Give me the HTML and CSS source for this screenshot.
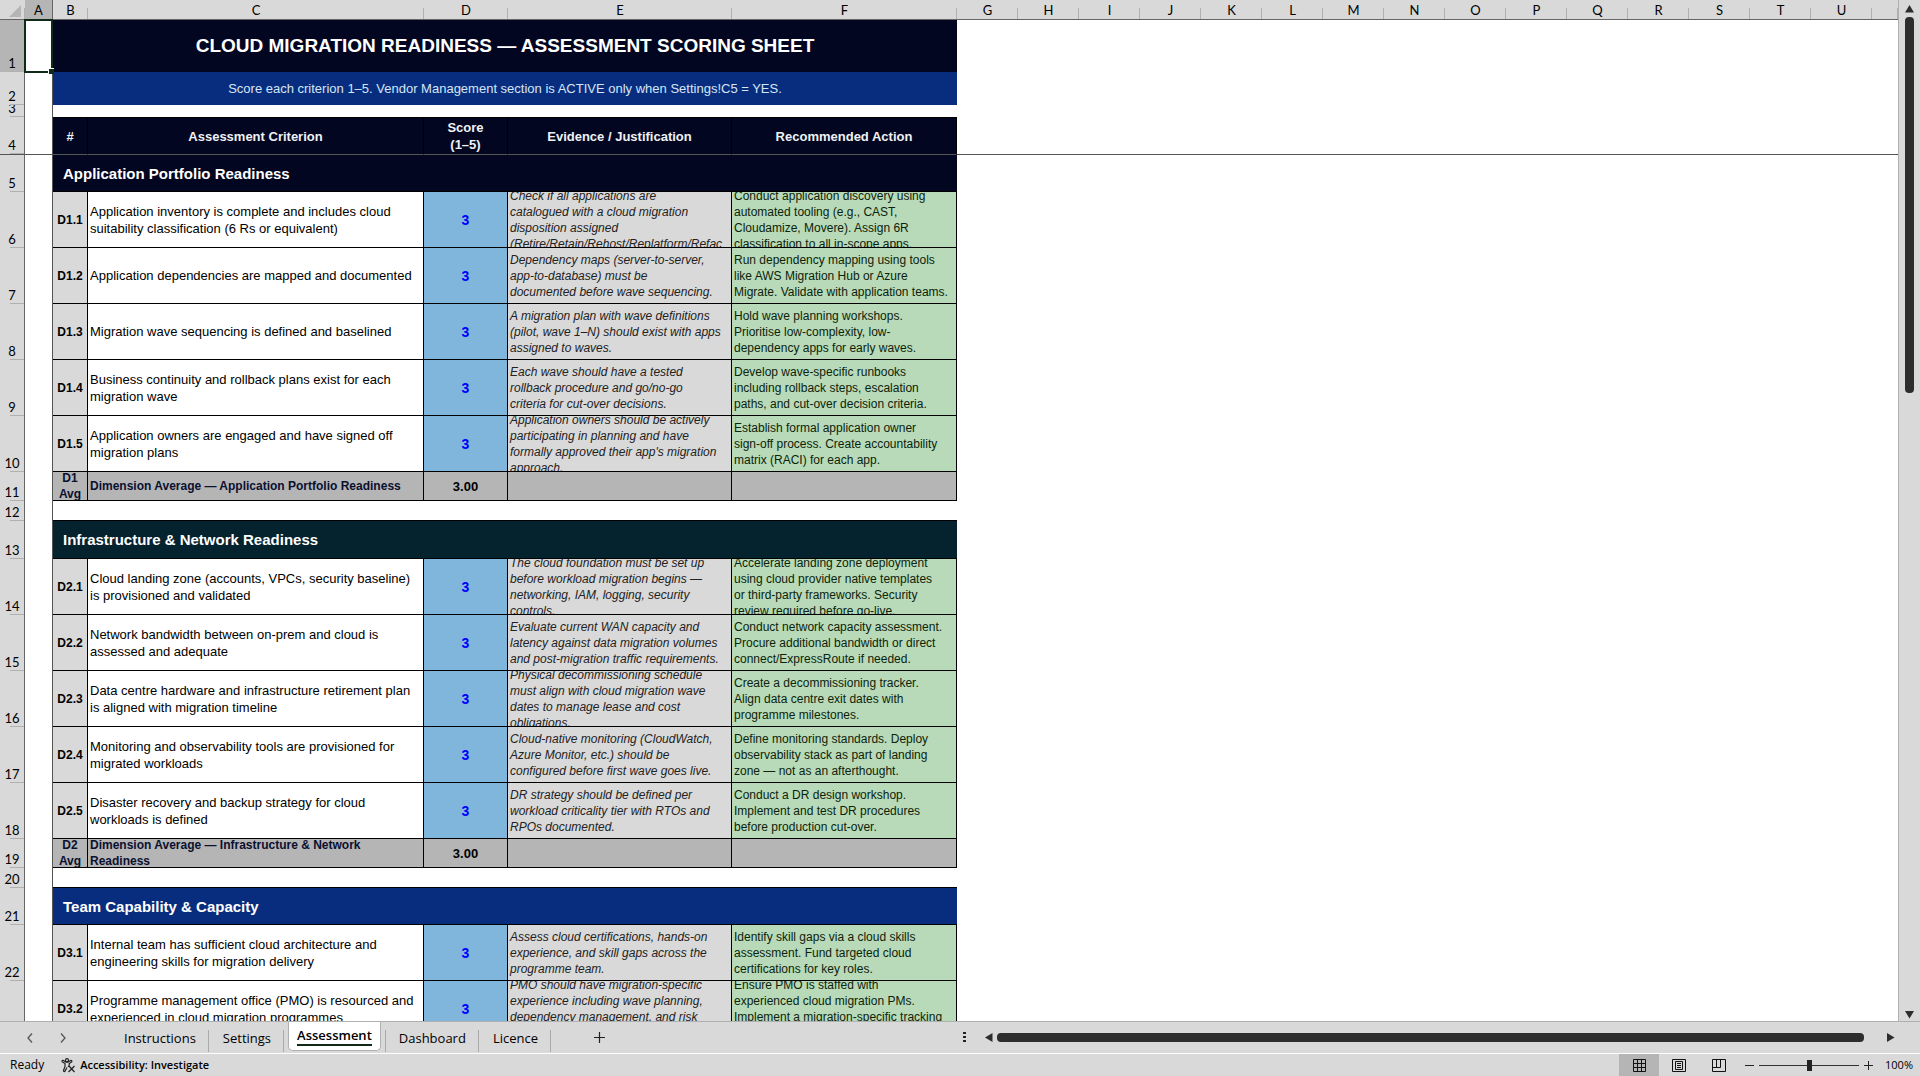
FILE: index.html
```html
<!DOCTYPE html>
<html lang="en">
<head>
<meta charset="utf-8">
<title>Cloud Migration Readiness</title>
<link rel="stylesheet" href="styles.css">
</head>
<body>
<div class="workbook">
  <main class="view">
    <div class="grid">
      <table class="sheet">
        <colgroup>
          <col class="w-num"><col class="w-a"><col class="w-b"><col class="w-c"><col class="w-d"><col class="w-e"><col class="w-f">
          <col class="w-x" span="15"><col>
        </colgroup>
        <thead>
          <tr class="letters">
            <th class="corner"><svg width="12" height="12" viewBox="0 0 12 12"><path d="M12 0v12H0z" fill="#b5b5b5"/></svg></th>
            <th class="on">A</th><th>B</th><th>C</th><th>D</th><th>E</th><th>F</th><th>G</th><th>H</th><th>I</th><th>J</th><th>K</th><th>L</th><th>M</th><th>N</th><th>O</th><th>P</th><th>Q</th><th>R</th><th>S</th><th>T</th><th>U</th><th></th>
          </tr>
          <tr class="h52"><th class="num on"><div>1</div></th><td class="pick"></td><td class="title" colspan="5">CLOUD MIGRATION READINESS — ASSESSMENT SCORING SHEET</td></tr>
          <tr class="h33"><th class="num"><div>2</div></th><td class="a"></td><td class="subtitle" colspan="5">Score each criterion 1–5. Vendor Management section is ACTIVE only when Settings!C5 = YES.</td></tr>
          <tr class="h12"><th class="num"><div>3</div></th><td class="a"></td></tr>
          <tr class="h38 heads"><th class="num"><div>4</div></th><td class="a"></td><th>#</th><th>Assessment Criterion</th><th>Score<br>(1–5)</th><th>Evidence / Justification</th><th>Recommended Action</th><td class="rest" colspan="16"></td></tr>
        </thead>
        <tbody>
          <tr class="h37"><th class="num"><div>5</div></th><td class="a"></td><td class="section navy" colspan="5">Application Portfolio Readiness</td></tr>
          <tr class="item"><th class="num"><div>6</div></th><td class="a"></td><td class="id"><div>D1.1</div></td><td class="crit"><div>Application inventory is complete and includes cloud<br>suitability classification (6 Rs or equivalent)</div></td><td class="score"><div>3</div></td><td class="evid"><div>Check if all applications are<br>catalogued with a cloud migration<br>disposition assigned<br>(Retire/Retain/Rehost/Replatform/Refac</div></td><td class="act"><div>Conduct application discovery using<br>automated tooling (e.g., CAST,<br>Cloudamize, Movere). Assign 6R<br>classification to all in-scope apps.</div></td></tr>
          <tr class="item"><th class="num"><div>7</div></th><td class="a"></td><td class="id"><div>D1.2</div></td><td class="crit"><div>Application dependencies are mapped and documented</div></td><td class="score"><div>3</div></td><td class="evid"><div>Dependency maps (server-to-server,<br>app-to-database) must be<br>documented before wave sequencing.</div></td><td class="act"><div>Run dependency mapping using tools<br>like AWS Migration Hub or Azure<br>Migrate. Validate with application teams.</div></td></tr>
          <tr class="item"><th class="num"><div>8</div></th><td class="a"></td><td class="id"><div>D1.3</div></td><td class="crit"><div>Migration wave sequencing is defined and baselined</div></td><td class="score"><div>3</div></td><td class="evid"><div>A migration plan with wave definitions<br>(pilot, wave 1–N) should exist with apps<br>assigned to waves.</div></td><td class="act"><div>Hold wave planning workshops.<br>Prioritise low-complexity, low-<br>dependency apps for early waves.</div></td></tr>
          <tr class="item"><th class="num"><div>9</div></th><td class="a"></td><td class="id"><div>D1.4</div></td><td class="crit"><div>Business continuity and rollback plans exist for each<br>migration wave</div></td><td class="score"><div>3</div></td><td class="evid"><div>Each wave should have a tested<br>rollback procedure and go/no-go<br>criteria for cut-over decisions.</div></td><td class="act"><div>Develop wave-specific runbooks<br>including rollback steps, escalation<br>paths, and cut-over decision criteria.</div></td></tr>
          <tr class="item"><th class="num"><div>10</div></th><td class="a"></td><td class="id"><div>D1.5</div></td><td class="crit"><div>Application owners are engaged and have signed off<br>migration plans</div></td><td class="score"><div>3</div></td><td class="evid"><div>Application owners should be actively<br>participating in planning and have<br>formally approved their app's migration<br>approach.</div></td><td class="act"><div>Establish formal application owner<br>sign-off process. Create accountability<br>matrix (RACI) for each app.</div></td></tr>
          <tr class="avg"><th class="num"><div>11</div></th><td class="a"></td><td class="id"><div>D1<br>Avg</div></td><td class="crit"><div>Dimension Average — Application Portfolio Readiness</div></td><td class="score"><div>3.00</div></td><td></td><td></td></tr>
          <tr class="h20"><th class="num"><div>12</div></th><td class="a"></td><td class="gap" colspan="5"></td></tr>
          <tr class="h38"><th class="num"><div>13</div></th><td class="a"></td><td class="section teal" colspan="5">Infrastructure &amp; Network Readiness</td></tr>
          <tr class="item"><th class="num"><div>14</div></th><td class="a"></td><td class="id"><div>D2.1</div></td><td class="crit"><div>Cloud landing zone (accounts, VPCs, security baseline)<br>is provisioned and validated</div></td><td class="score"><div>3</div></td><td class="evid"><div>The cloud foundation must be set up<br>before workload migration begins —<br>networking, IAM, logging, security<br>controls.</div></td><td class="act"><div>Accelerate landing zone deployment<br>using cloud provider native templates<br>or third-party frameworks. Security<br>review required before go-live.</div></td></tr>
          <tr class="item"><th class="num"><div>15</div></th><td class="a"></td><td class="id"><div>D2.2</div></td><td class="crit"><div>Network bandwidth between on-prem and cloud is<br>assessed and adequate</div></td><td class="score"><div>3</div></td><td class="evid"><div>Evaluate current WAN capacity and<br>latency against data migration volumes<br>and post-migration traffic requirements.</div></td><td class="act"><div>Conduct network capacity assessment.<br>Procure additional bandwidth or direct<br>connect/ExpressRoute if needed.</div></td></tr>
          <tr class="item"><th class="num"><div>16</div></th><td class="a"></td><td class="id"><div>D2.3</div></td><td class="crit"><div>Data centre hardware and infrastructure retirement plan<br>is aligned with migration timeline</div></td><td class="score"><div>3</div></td><td class="evid"><div>Physical decommissioning schedule<br>must align with cloud migration wave<br>dates to manage lease and cost<br>obligations.</div></td><td class="act"><div>Create a decommissioning tracker.<br>Align data centre exit dates with<br>programme milestones.</div></td></tr>
          <tr class="item"><th class="num"><div>17</div></th><td class="a"></td><td class="id"><div>D2.4</div></td><td class="crit"><div>Monitoring and observability tools are provisioned for<br>migrated workloads</div></td><td class="score"><div>3</div></td><td class="evid"><div>Cloud-native monitoring (CloudWatch,<br>Azure Monitor, etc.) should be<br>configured before first wave goes live.</div></td><td class="act"><div>Define monitoring standards. Deploy<br>observability stack as part of landing<br>zone — not as an afterthought.</div></td></tr>
          <tr class="item"><th class="num"><div>18</div></th><td class="a"></td><td class="id"><div>D2.5</div></td><td class="crit"><div>Disaster recovery and backup strategy for cloud<br>workloads is defined</div></td><td class="score"><div>3</div></td><td class="evid"><div>DR strategy should be defined per<br>workload criticality tier with RTOs and<br>RPOs documented.</div></td><td class="act"><div>Conduct a DR design workshop.<br>Implement and test DR procedures<br>before production cut-over.</div></td></tr>
          <tr class="avg"><th class="num"><div>19</div></th><td class="a"></td><td class="id"><div>D2<br>Avg</div></td><td class="crit"><div>Dimension Average — Infrastructure &amp; Network<br>Readiness</div></td><td class="score"><div>3.00</div></td><td></td><td></td></tr>
          <tr class="h20"><th class="num"><div>20</div></th><td class="a"></td><td class="gap" colspan="5"></td></tr>
          <tr class="h37"><th class="num"><div>21</div></th><td class="a"></td><td class="section blue" colspan="5">Team Capability &amp; Capacity</td></tr>
          <tr class="item"><th class="num"><div>22</div></th><td class="a"></td><td class="id"><div>D3.1</div></td><td class="crit"><div>Internal team has sufficient cloud architecture and<br>engineering skills for migration delivery</div></td><td class="score"><div>3</div></td><td class="evid"><div>Assess cloud certifications, hands-on<br>experience, and skill gaps across the<br>programme team.</div></td><td class="act"><div>Identify skill gaps via a cloud skills<br>assessment. Fund targeted cloud<br>certifications for key roles.</div></td></tr>
          <tr class="item"><th class="num"><div>23</div></th><td class="a"></td><td class="id"><div>D3.2</div></td><td class="crit"><div>Programme management office (PMO) is resourced and<br>experienced in cloud migration programmes</div></td><td class="score"><div>3</div></td><td class="evid"><div>PMO should have migration-specific<br>experience including wave planning,<br>dependency management, and risk<br>tracking.</div></td><td class="act"><div>Ensure PMO is staffed with<br>experienced cloud migration PMs.<br>Implement a migration-specific tracking<br>register.</div></td></tr>
        </tbody>
      </table>
    </div>
    <div class="vscroll">
      <svg width="9" height="8" viewBox="0 0 9 8"><path d="M4.500 0L9 7.500H0z" fill="#2d2d2d"/></svg>
      <div class="vtrack"><div class="vthumb"></div></div>
      <svg width="9" height="8" viewBox="0 0 9 8"><path d="M0 0h9L4.500 7.500z" fill="#2d2d2d"/></svg>
    </div>
  </main>

  <nav class="tabs" aria-label="Sheets">
    <div class="arrows">
      <button aria-label="Previous sheet"><svg width="6" height="10" viewBox="0 0 6 10"><path d="M5 .5L1 5l4 4.500" fill="none" stroke="#555" stroke-width="1.300"/></svg></button>
      <button aria-label="Next sheet"><svg width="6" height="10" viewBox="0 0 6 10"><path d="M1 .5L5 5 1 9.500" fill="none" stroke="#555" stroke-width="1.300"/></svg></button>
    </div>
    <button class="tab">Instructions</button>
    <button class="tab">Settings</button>
    <button class="tab active"><span>Assessment</span></button>
    <button class="tab first">Dashboard</button>
    <button class="tab">Licence</button>
    <button class="add" aria-label="New sheet"><svg width="13" height="13" viewBox="0 0 13 13"><path d="M6.500 1v11M1 6.500h11" stroke="#222" stroke-width="1.200"/></svg></button>
    <div class="hscroll">
      <svg class="dots" width="3" height="11" viewBox="0 0 3 11"><path d="M0 0h3v2H0zM0 4h3v2H0zM0 8h3v2H0z" fill="#222"/></svg>
      <svg width="8" height="9" viewBox="0 0 8 9"><path d="M7.500 0v9L0 4.500z" fill="#2d2d2d"/></svg>
      <div class="hthumb"></div>
      <svg width="8" height="9" viewBox="0 0 8 9"><path d="M0 0v9l7.500-4.500z" fill="#2d2d2d"/></svg>
    </div>
  </nav>

  <footer class="status">
    <span class="ready">Ready</span>
    <button class="access"><svg width="15" height="15" viewBox="0 0 15 15" fill="none" stroke="#222" stroke-width="1.200"><circle cx="6" cy="2.200" r="1.500"/><path d="M1 3.200c0-1 1-1 1.500-.7L5 4.200h2L9.500 2.500c1-.5 2 .7 1 1.400L8.200 5.500v2L7 9M1 3.200c0 .4.200.6.500.8L4 5.500v3L2.500 12.500c-.3 1 1 1.500 1.500.6L6 9.500M8 8l5.500 6M13.500 8L7.500 14"/></svg>Accessibility: Investigate</button>
    <div class="right">
      <button class="mode on" aria-label="Normal"><svg width="13" height="13" viewBox="0 0 13 13" fill="none" stroke="#111"><path d="M.5.5h12v12H.5zM4.500.5v12M8.500.5v12M.5 4.500h12M.5 8.500h12"/></svg></button>
      <button class="mode" aria-label="Page layout"><svg width="14" height="13" viewBox="0 0 14 13" fill="none" stroke="#111"><path d="M.5.5h13v12H.5zM3.500 2.500h7v8h-7zM5 4.500h4M5 6.500h4M5 8.500h4"/></svg></button>
      <button class="mode" aria-label="Page break preview"><svg width="14" height="13" viewBox="0 0 14 13" fill="none" stroke="#111"><path d="M.5.5h13v12H.5zM.5 8.500h8V.5M4.500.5v8"/></svg></button>
      <div class="zoom">
        <button aria-label="Zoom out"><svg width="9" height="9" viewBox="0 0 9 9"><path d="M0 4.500h9" stroke="#222"/></svg></button>
        <input type="range" min="0" max="100" value="50" aria-label="Zoom">
        <button aria-label="Zoom in"><svg width="9" height="9" viewBox="0 0 9 9"><path d="M0 4.500h9M4.500 0v9" stroke="#222"/></svg></button>
      </div>
      <span class="pct">100%</span>
    </div>
  </footer>
</div>
</body>
</html>
```
FILE: styles.css
```css
* { box-sizing: border-box; }

body {
  margin: 0;
  background: #d9d9d9;
  color: #000;
  font-family: "Liberation Sans", Arial, sans-serif;
}

button {
  margin: 0;
  padding: 0;
  border: 0;
  background: none;
  color: inherit;
  font: inherit;
}

svg { display: block; flex: none; }

.workbook {
  display: flex;
  flex-direction: column;
  height: 100vh;
}

/* Grid area */
.view {
  display: flex;
  flex: 1;
  min-height: 0;
  border-bottom: 1px solid #b0b0b0;
}

.grid {
  flex: 1;
  min-width: 0;
  overflow: hidden;
  background: #fff;
  border-right: 1px solid #b0b0b0;
}

.sheet {
  width: 100%;
  table-layout: fixed;
  border-collapse: separate;
  border-spacing: 0;
  white-space: nowrap;
}

.w-num { width: 25px; }
.w-a { width: 28px; }
.w-b { width: 35px; }
.w-c { width: 336px; }
.w-d { width: 84px; }
.w-e { width: 224px; }
.w-f { width: 225px; }
.w-x { width: 61px; }

.sheet td, .sheet th { padding: 0; }

.letters th {
  height: 20px;
  background: linear-gradient(#b0b0b0, #b0b0b0) right bottom / 1px 11px no-repeat #d9d9d9;
  border-bottom: 1px solid #666;
  font: 400 13px/17px Lato, sans-serif;
}

.letters th:not(.corner) { padding-top: 2px; }
.letters .on { background: #b5b5b5; border-right: 1px solid #666; }
.letters .corner svg { margin: 3px 0 0 9px; }

.num {
  background: linear-gradient(#b0b0b0, #b0b0b0) right bottom / 14px 1px no-repeat #d9d9d9;
  border-right: 1px solid #666;
  font: 400 13px/17px Lato, sans-serif;
}

.num.on { background-color: #b5b5b5; }

.num div {
  display: flex;
  align-items: flex-end;
  justify-content: center;
  overflow: hidden;
}

.h52 td, .h52 .num div { height: 52px; }
.h33 td, .h33 .num div { height: 33px; }
.h12 td, .h12 .num div { height: 12px; }
.h38 td { height: 38px; }
.h38 .num div { height: 37px; }
.h37 td, .h37 .num div { height: 37px; }
.h20 td, .h20 .num div { height: 20px; }
.item .num div { height: 56px; }
.avg .num div { height: 29px; }

.a { border-right: 1px solid #555; }

.pick {
  position: relative;
  border-right: 1px solid #555;
}

.pick::before {
  content: "";
  position: absolute;
  inset: -1px -1px -1px -1px;
  border: 2px solid #0f2a17;
}

.pick::after {
  content: "";
  position: absolute;
  right: -2px;
  bottom: -2px;
  width: 5px;
  height: 5px;
  background: #0f2a17;
  border: solid #fff;
  border-width: 1px 0 0 1px;
}

.title {
  background: #030620;
  color: #fff;
  font-size: 19px;
  font-weight: 700;
  text-align: center;
}

.subtitle {
  background: #082d7e;
  color: #d5e6f5;
  font-size: 13px;
  text-align: center;
}

.heads th:not(.num) {
  background: #030620;
  border: 1px solid #000;
  border-width: 1px 1px 1px 0;
  border-bottom-color: #555;
  color: #eef2f6;
  font-size: 13px;
  line-height: 17px;
}

.heads .num, .heads .a, .heads .rest { border-bottom: 1px solid #555; }

.section {
  padding-left: 10px !important;
  border-bottom: 1px solid #000;
  color: #fff;
  font-size: 15px;
  font-weight: 700;
}

.navy { background: #030620; }
.teal { background: #05222f; }
.blue { background: #082d7e; }
.gap { border-bottom: 1px solid #000; }

/* Scored rows */
.item td:not(.a), .avg td:not(.a) {
  border: solid #000;
  border-width: 0 1px 1px 0;
}

.item td div, .avg td div {
  display: flex;
  align-items: center;
  overflow: hidden;
}

.item td div { height: 55px; }
.avg td div { height: 28px; }

.id div, .score div { justify-content: center; text-align: center; }

.id {
  background: #d9d9d9;
  font-size: 12px;
  font-weight: 700;
  line-height: 16px;
}

.crit { font-size: 13px; line-height: 17px; }
.crit div { padding-left: 2px; }

.score {
  background: #80b6db;
  color: #00f;
  font-size: 14px;
  font-weight: 700;
}

.evid {
  background: #d9d9d9;
  color: #222;
  font-size: 12px;
  font-style: italic;
  line-height: 16px;
}

.act {
  background: #b8dab8;
  color: #0c230c;
  font-size: 12px;
  line-height: 16px;
}

.evid div, .act div { padding-left: 2px; }

.avg td:not(.a) { background: #b5b5b5; color: #0a1030; }
.avg .crit { font-size: 12px; font-weight: 700; line-height: 16px; }
.avg td.score { color: #000; font-size: 13px; }

/* Scrollbars */
.vscroll {
  display: flex;
  flex-direction: column;
  align-items: center;
  gap: 4px;
  width: 21px;
  padding: 5px 0 2px;
}

.vtrack { flex: 1; }
.vthumb { width: 9px; height: 38%; border-radius: 4px; background: #2d2d2d; }

.hscroll {
  display: flex;
  align-items: center;
  width: 50%;
  margin-left: auto;
  padding: 0 25px 1px 3px;
}

.dots { margin-right: 19px; }
.hthumb { flex: 1; height: 9px; margin: 0 23px 0 4px; border-radius: 4px; background: #2d2d2d; }

/* Sheet tabs */
.tabs {
  display: flex;
  height: 32px;
  border-bottom: 1px solid #fff;
  font: 13px/18px "Open Sans", sans-serif;
}

.arrows {
  display: flex;
  gap: 27px;
  width: 110px;
  padding-left: 27px;
}

.tab {
  padding: 0 13px 0 14px;
  background: linear-gradient(#aaa, #aaa) right 8px / 1px 22px no-repeat;
}

.active {
  height: 29px;
  margin: 0 4px;
  padding: 0 8px;
  background: #fff;
  border: 1px solid #b0b0b0;
  border-top: 0;
  border-radius: 0 0 5px 5px;
  font-weight: 600;
}

.active span { display: block; border-bottom: 2px solid #0f2a17; }
.first { background: linear-gradient(#aaa, #aaa) left 8px / 1px 22px no-repeat, linear-gradient(#aaa, #aaa) right 8px / 1px 22px no-repeat; }
.add { margin-left: 42px; }

/* Status bar */
.status {
  display: flex;
  align-items: center;
  height: 22px;
  padding-left: 10px;
  font: 12px/16px "Open Sans", sans-serif;
}

.ready { margin-right: 17px; }
.access { display: flex; align-items: center; gap: 4px; font-size: 11px; font-weight: 600; }
.right { display: flex; align-items: center; margin-left: auto; height: 100%; }
.mode { display: flex; align-items: center; justify-content: center; width: 40px; height: 100%; }
.mode.on { background: #b5b5b5; }
.zoom { display: flex; align-items: center; gap: 5px; margin-left: 6px; }

.zoom input {
  width: 100px;
  height: 11px;
  margin: 0;
  appearance: none;
  background: linear-gradient(#333, #333) center / 100% 1px no-repeat;
}

.zoom input::-webkit-slider-thumb {
  appearance: none;
  width: 5px;
  height: 11px;
  background: #222;
}

.pct { width: 47px; padding-right: 7px; font-size: 11px; text-align: right; }
```
